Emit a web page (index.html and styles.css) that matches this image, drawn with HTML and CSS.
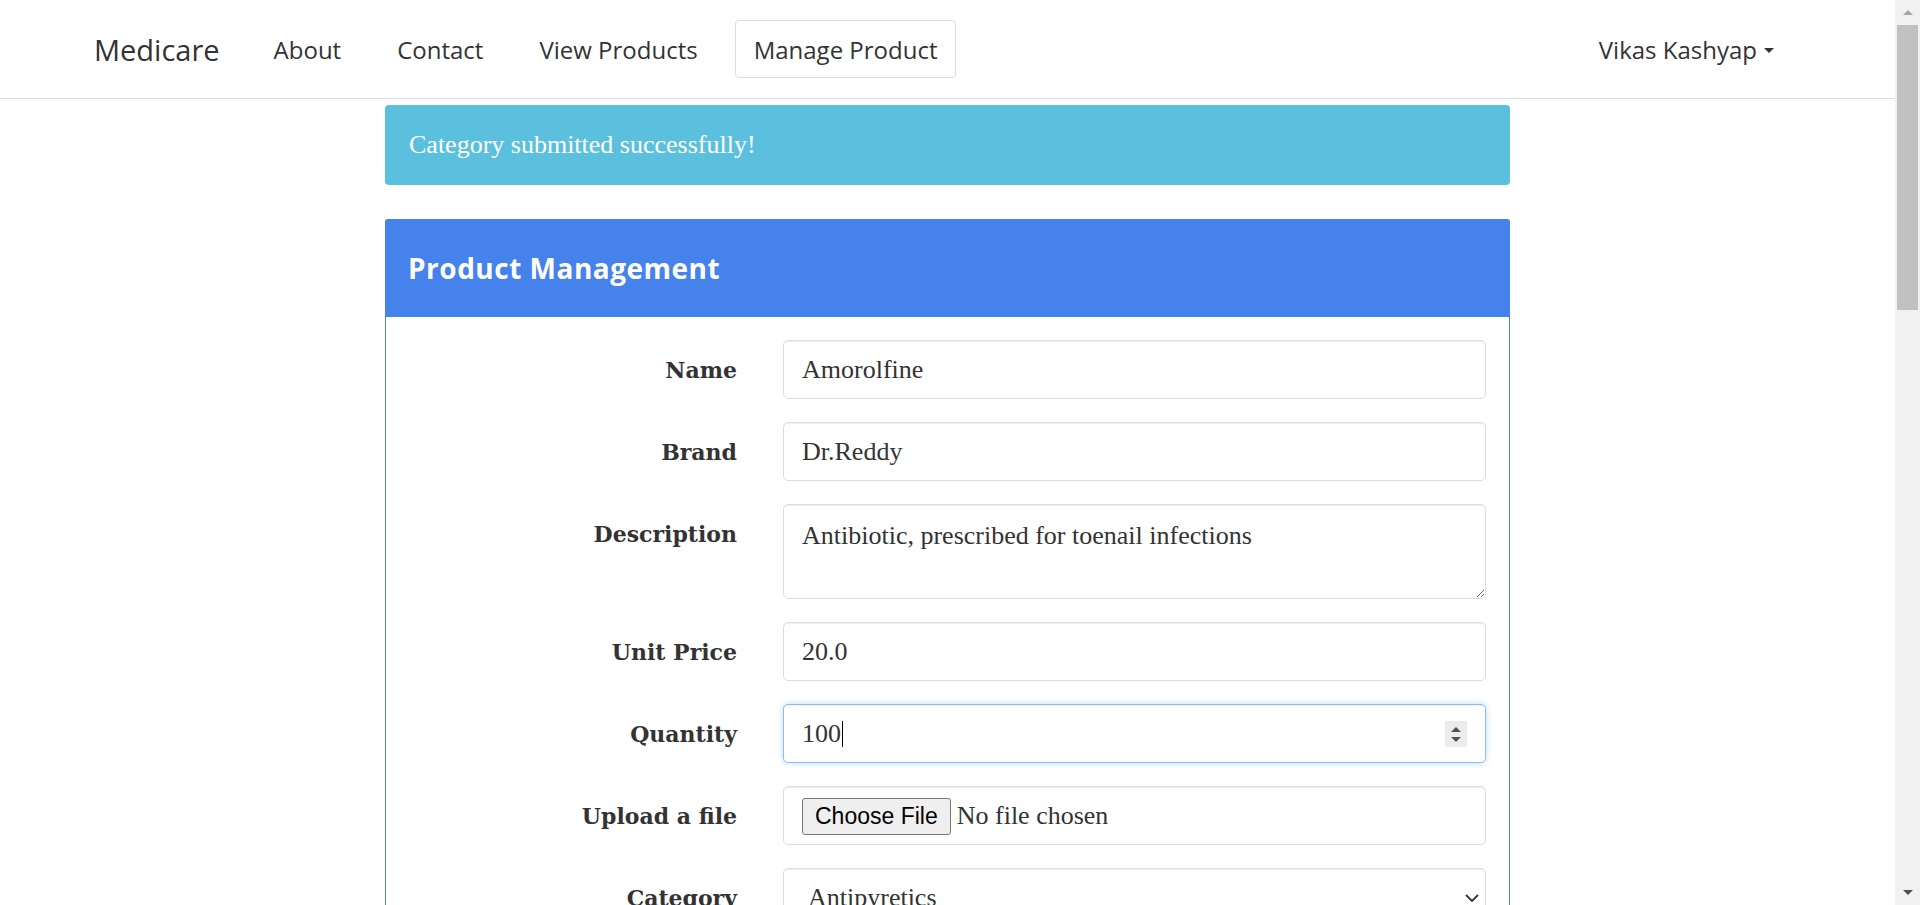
FILE: index.html
```html
<!DOCTYPE html>
<html lang="en">
<head>
<meta charset="utf-8">
<title>Medicare - Manage Product</title>
<link rel="stylesheet" href="styles.css">
</head>
<body>
<nav class="navbar">
  <div class="nav-left">
    <a class="brand" href="#">Medicare</a>
    <ul class="nav-links">
      <li><a href="#">About</a></li>
      <li><a href="#">Contact</a></li>
      <li><a href="#">View Products</a></li>
      <li class="active"><a href="#">Manage Product</a></li>
    </ul>
  </div>
  <div class="nav-right">
    <a class="dropdown-toggle" href="#">Vikas Kashyap <span class="caret"></span></a>
  </div>
</nav>

<main class="page">
  <div class="alert">Category submitted successfully!</div>

  <section class="panel">
    <div class="panel-heading">
      <h3>Product Management</h3>
    </div>
    <div class="panel-body">
      <form class="form-grid">
        <label class="control-label" for="name">Name</label>
        <input class="form-control" id="name" type="text" value="Amorolfine">

        <label class="control-label" for="brand">Brand</label>
        <input class="form-control" id="brand" type="text" value="Dr.Reddy">

        <label class="control-label" for="description">Description</label>
        <textarea class="form-control textarea" id="description">Antibiotic, prescribed for toenail infections</textarea>

        <label class="control-label" for="price">Unit Price</label>
        <input class="form-control" id="price" type="text" value="20.0">

        <label class="control-label" for="quantity">Quantity</label>
        <div class="input-wrap">
          <input class="form-control focused" id="quantity" type="text" value="100">
          <span class="text-caret"></span>
          <span class="spinner"><span class="spin-up"></span><span class="spin-down"></span></span>
        </div>

        <label class="control-label" for="file">Upload a file</label>
        <input class="form-control file-input" id="file" type="file">

        <label class="control-label" for="category">Category</label>
        <div class="input-wrap">
          <select class="form-control select" id="category">
            <option>Antipyretics</option>
            <option>Antibiotics</option>
            <option>Analgesics</option>
          </select>
          <svg class="select-arrow" width="14" height="8" viewBox="0 0 14 8" aria-hidden="true">
            <path d="M1 1 L7 7 L13 1" fill="none" stroke="#333" stroke-width="1.8"/>
          </svg>
        </div>

        <span></span>
        <div class="actions"><button type="button" class="btn-primary">Submit</button></div>
      </form>
    </div>
  </section>
</main>

<div class="scrollbar" aria-hidden="true">
  <span class="sb-button"><span class="sb-arrow-up"></span></span>
  <span class="sb-thumb"></span>
  <span class="sb-track"></span>
  <span class="sb-button"><span class="sb-arrow-down"></span></span>
</div>
</body>
</html>
```

FILE: styles.css
```css
html, body {
  margin: 0;
  padding: 0;
}

body {
  background: #ffffff;
  color: #333333;
  font-family: "Liberation Serif", "Times New Roman", serif;
  font-size: 26px;
  padding-right: 25px;
}

/* imitation of the window scrollbar */
.scrollbar {
  position: fixed;
  top: 0;
  right: 0;
  width: 25px;
  height: 100vh;
  background: #f1f1f1;
  display: flex;
  flex-direction: column;
}

.sb-button {
  height: 25px;
  flex: none;
  display: flex;
  align-items: center;
  justify-content: center;
}

.sb-arrow-up {
  width: 0;
  height: 0;
  border-bottom: 5px solid #a3a3a3;
  border-left: 5px solid transparent;
  border-right: 5px solid transparent;
}

.sb-arrow-down {
  width: 0;
  height: 0;
  border-top: 5px solid #505050;
  border-left: 5px solid transparent;
  border-right: 5px solid transparent;
}

.sb-thumb {
  height: 285px;
  flex: none;
  margin: 0 2px;
  background: #c1c1c1;
}

.sb-track {
  flex: 1;
}

/* navbar */
.navbar {
  display: flex;
  align-items: center;
  justify-content: space-between;
  height: 98px;
  border-bottom: 1px solid #dddddd;
  padding: 0 102px 0 94px;
  font-family: "Open Sans", "Noto Sans", sans-serif;
}

.nav-left {
  display: flex;
  align-items: center;
}

.brand {
  font-size: 29px;
  color: #333333;
  text-decoration: none;
  margin-right: 35px;
  line-height: 1;
}

.nav-links {
  display: flex;
  gap: 18px;
  list-style: none;
  margin: 0;
  padding: 0;
}

.nav-links a,
.dropdown-toggle {
  display: flex;
  align-items: center;
  height: 56px;
  padding: 0 18px;
  border: 1px solid transparent;
  border-radius: 4px;
  font-size: 24px;
  color: #333333;
  text-decoration: none;
}

.nav-links .active a {
  border-color: #dddddd;
}

.caret {
  display: inline-block;
  width: 0;
  height: 0;
  margin-left: 7px;
  margin-top: 3px;
  border-top: 5px solid #333333;
  border-left: 5px solid transparent;
  border-right: 5px solid transparent;
}

/* page */
.page {
  padding-top: 6px;
  padding-bottom: 40px;
}

.alert {
  width: 1125px;
  box-sizing: border-box;
  margin: 0 auto;
  height: 80px;
  display: flex;
  align-items: center;
  padding: 0 24px;
  background: #5bc0de;
  border-radius: 4px;
  color: #ffffff;
  font-size: 26px;
}

.panel {
  width: 1125px;
  box-sizing: border-box;
  margin: 34px auto 0;
  border: 1px solid #4582ec;
  border-radius: 4px;
}

.panel-heading {
  height: 98px;
  display: flex;
  align-items: center;
  padding: 0 23px;
  background: #4582ec;
  border-radius: 3px 3px 0 0;
  margin: -1px -1px 0;
}

.panel-heading h3 {
  margin: 0;
  color: #ffffff;
  font-family: "Open Sans", "Noto Sans", sans-serif;
  font-weight: 700;
  font-size: 28px;
  letter-spacing: 0.5px;
}

.panel-body {
  padding: 23px 23px 30px 24px;
}

.form-grid {
  display: grid;
  grid-template-columns: 327px 703px;
  column-gap: 46px;
  row-gap: 23px;
  align-items: start;
}

.control-label {
  display: flex;
  align-items: center;
  justify-content: flex-end;
  height: 59px;
  font-family: "DejaVu Serif", Georgia, serif;
  font-weight: 700;
  font-size: 22px;
  color: #333333;
}

.form-control {
  display: block;
  width: 100%;
  height: 59px;
  box-sizing: border-box;
  margin: 0;
  padding: 0 18px;
  border: 1px solid #dddddd;
  border-radius: 5px;
  background: #ffffff;
  box-shadow: inset 0 1px 1px rgba(0, 0, 0, 0.075);
  font-family: "Liberation Serif", "Times New Roman", serif;
  font-size: 26px;
  color: #333333;
  outline: none;
}

.textarea {
  height: 95px;
  padding: 11px 18px;
  line-height: 1.5;
  resize: vertical;
}

.input-wrap {
  position: relative;
}

.form-control.focused {
  border-color: #8cc0ec;
  box-shadow: inset 0 1px 1px rgba(0, 0, 0, 0.075), 0 0 6px rgba(102, 175, 233, 0.45);
}

.text-caret {
  position: absolute;
  left: 59px;
  top: 17px;
  width: 1px;
  height: 26px;
  background: #000000;
}

.spinner {
  position: absolute;
  right: 19px;
  top: 17px;
  width: 22px;
  height: 26px;
  background: #ececec;
  display: flex;
  flex-direction: column;
  align-items: center;
  justify-content: center;
  gap: 5px;
}

.spin-up {
  width: 0;
  height: 0;
  border-bottom: 5px solid #505050;
  border-left: 5px solid transparent;
  border-right: 5px solid transparent;
}

.spin-down {
  width: 0;
  height: 0;
  border-top: 5px solid #505050;
  border-left: 5px solid transparent;
  border-right: 5px solid transparent;
}

.file-input {
  display: flex;
  align-items: center;
  padding: 0 18px;
  line-height: 57px;
}

.file-input::file-selector-button {
  font-family: "Liberation Sans", Arial, sans-serif;
  font-size: 23px;
  height: 37px;
  padding: 0 12px;
  margin-right: 6px;
  color: #000000;
  background: #efefef;
  border: 1px solid #767676;
  border-radius: 3px;
}

.select {
  -webkit-appearance: none;
  appearance: none;
  padding: 0 40px 0 24px;
}

.select-arrow {
  position: absolute;
  right: 7px;
  top: 26px;
  pointer-events: none;
}

.actions {
  padding-top: 4px;
}

.btn-primary {
  font-family: "Open Sans", "Noto Sans", sans-serif;
  font-size: 21px;
  color: #ffffff;
  background: #4582ec;
  border: 1px solid #4582ec;
  border-radius: 4px;
  padding: 10px 24px;
}
```
